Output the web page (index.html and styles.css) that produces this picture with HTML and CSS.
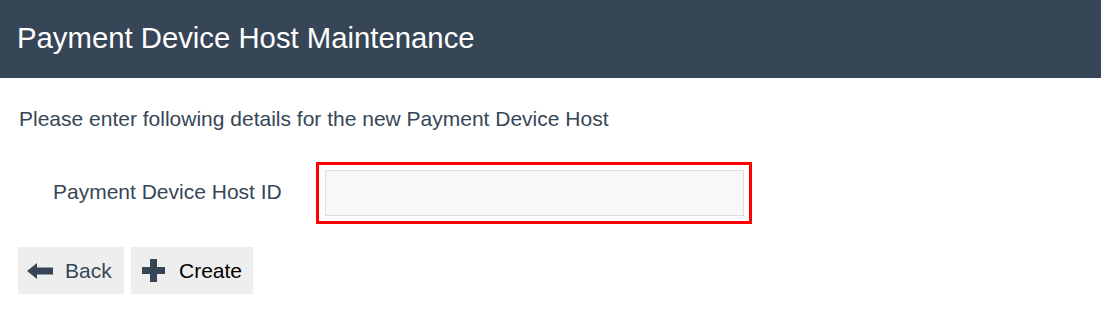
FILE: index.html
```html
<!DOCTYPE html>
<html lang="en">

<head>
    <title>Payment Device Host Maintenance</title>
    <meta charset="UTF-8">
    <meta name="viewport" content="width=device-width, initial-scale=1.0">
    <link rel="stylesheet" href="styles.css">
</head>

<body>
    <div class="header">
        <h1>Payment Device Host Maintenance</h1>
    </div>

    <div class="content">
        <p class="intro">Please enter following details for the new Payment Device Host</p>

        <form class="hostForm">
            <div class="form-row">
                <label for="hostIdInput">Payment Device Host ID</label>
                <div class="field-highlight">
                    <input type="text" id="hostIdInput" class="hostIdClass" name="hostIdInput">
                </div>
            </div>
        </form>

        <div class="button-row">
            <button type="button" class="button buttonBack">
                <svg width="27" height="16" viewBox="0 0 27 16">
                    <path d="M0 8 L10 0 L10 4.5 L26 4.5 L26 11.5 L10 11.5 L10 16 Z" fill="#364656" />
                </svg>
                Back
            </button>
            <button type="button" class="button buttonCreate">
                <svg width="23" height="23" viewBox="0 0 23 23">
                    <path d="M8 0 H15 V8 H23 V15 H15 V23 H8 V15 H0 V8 H8 Z" fill="#364656" />
                </svg>
                Create
            </button>
        </div>
    </div>
</body>

</html>
```

FILE: styles.css
```css
body {
    margin: 0;
    font-family: "Liberation Sans", Arial, sans-serif;
    color: #364656;
    background: #ffffff;
}

.header {
    background: #364656;
    height: 78px;
    display: flex;
    align-items: center;
    padding-left: 17px;
}

.header h1 {
    margin: 0;
    font-size: 29.3px;
    font-weight: normal;
    color: #ffffff;
    padding-bottom: 2px;
}

.content {
    padding: 0 18px;
}

.intro {
    margin: 29px 0 0 1px;
    font-size: 21px;
    line-height: 24px;
}

.form-row {
    display: flex;
    align-items: center;
    margin-top: 31px;
}

.form-row label {
    width: 298px;
    padding-left: 35px;
    padding-bottom: 2px;
    box-sizing: border-box;
    font-size: 21px;
}

.field-highlight {
    border: 3px solid #ff0000;
    padding: 5px 5px 5px 6px;
    width: 436px;
    box-sizing: border-box;
}

.hostIdClass {
    display: block;
    width: 100%;
    height: 46px;
    box-sizing: border-box;
    border: 1px solid #dddddd;
    background: #f8f8f8;
    font-size: 16px;
    outline: none;
}

.button-row {
    display: flex;
    gap: 7px;
    margin-top: 23px;
}

.button {
    display: flex;
    align-items: center;
    height: 47px;
    border: none;
    background: #eeeeee;
    font-family: "Liberation Sans", Arial, sans-serif;
    font-size: 21px;
    cursor: pointer;
}

.buttonBack {
    width: 106px;
    padding: 0 0 0 9px;
    color: #364656;
}

.buttonBack svg {
    margin-right: 11px;
}

.buttonCreate {
    width: 122px;
    padding: 0 0 0 11px;
    color: #000000;
}

.buttonCreate svg {
    margin-right: 14px;
}
```
